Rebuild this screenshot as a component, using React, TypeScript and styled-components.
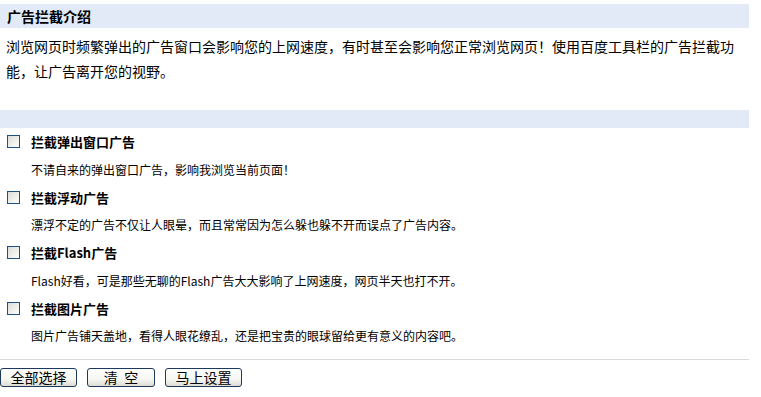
import React from "react";
import styled, { createGlobalStyle } from "styled-components";

const GlobalStyle = createGlobalStyle`
  html, body {
    margin: 0;
    padding: 0;
    background: #fff;
  }
  body {
    font-family: "Noto Sans CJK SC", "Liberation Sans", sans-serif;
    color: #000;
  }
`;

const Page = styled.div`
  width: 749px;
  padding-top: 4px;
`;

const Bar = styled.div<{ $h: number }>`
  height: ${(p) => p.$h}px;
  background: #e2eaf7;
  display: flex;
  align-items: center;
  padding-left: 7px;
`;

const BarTitle = styled.h2`
  margin: 0;
  font-size: 14px;
  font-weight: bold;
  line-height: 1;
`;

const Intro = styled.p`
  margin: 6px 0 26px;
  padding-left: 6px;
  font-size: 14px;
  line-height: 25px;
`;

const List = styled.div`
  display: flex;
  flex-direction: column;
`;

const TitleRow = styled.label`
  height: 27px;
  display: flex;
  align-items: center;
  gap: 11px;
  padding-left: 7px;
  font-size: 13px;
  font-weight: bold;
`;

const Check = styled.input.attrs({ type: "checkbox" })`
  appearance: none;
  margin: 0;
  width: 13px;
  height: 13px;
  box-sizing: border-box;
  border: 1px solid #1c5180;
  background: linear-gradient(135deg, #dcdcd7 0%, #f4f4f0 70%, #fff 100%);

  &:checked {
    background: #fff;
  }
`;

const Desc = styled.div`
  height: 28.5px;
  display: flex;
  align-items: center;
  padding-left: 31px;
  font-size: 12px;
`;

const Rule = styled.hr`
  margin: 9px 0 0;
  border: none;
  border-top: 1px solid #d9d9d9;
`;

const Actions = styled.div`
  display: flex;
  gap: 10px;
  padding-top: 8px;
`;

const Button = styled.button<{ $w: number }>`
  width: ${(p) => p.$w}px;
  height: 19px;
  padding: 0;
  border: 1px solid #1b3a5e;
  border-radius: 3px;
  background: linear-gradient(#ffffff 0%, #f6f6f2 60%, #dedcd3 100%);
  font-family: "Noto Sans CJK SC", "Liberation Sans", sans-serif;
  font-size: 14px;
  line-height: 17px;
  color: #000;
  white-space: pre;
  cursor: pointer;
`;

const items = [
  {
    title: "拦截弹出窗口广告",
    desc: "不请自来的弹出窗口广告，影响我浏览当前页面！",
  },
  {
    title: "拦截浮动广告",
    desc: "漂浮不定的广告不仅让人眼晕，而且常常因为怎么躲也躲不开而误点了广告内容。",
  },
  {
    title: "拦截Flash广告",
    desc: "Flash好看，可是那些无聊的Flash广告大大影响了上网速度，网页半天也打不开。",
  },
  {
    title: "拦截图片广告",
    desc: "图片广告铺天盖地，看得人眼花缭乱，还是把宝贵的眼球留给更有意义的内容吧。",
  },
];

export default function App() {
  return (
    <Page>
      <GlobalStyle />
      <Bar $h={24}>
        <BarTitle>广告拦截介绍</BarTitle>
      </Bar>
      <Intro>
        浏览网页时频繁弹出的广告窗口会影响您的上网速度，有时甚至会影响您正常浏览网页！使用百度工具栏的广告拦截功能，让广告离开您的视野。
      </Intro>
      <Bar $h={18} />
      <List>
        {items.map((it) => (
          <React.Fragment key={it.title}>
            <TitleRow>
              <Check />
              {it.title}
            </TitleRow>
            <Desc>{it.desc}</Desc>
          </React.Fragment>
        ))}
      </List>
      <Rule />
      <Actions>
        <Button $w={77}>全部选择</Button>
        <Button $w={68}>{"清  空"}</Button>
        <Button $w={77}>马上设置</Button>
      </Actions>
    </Page>
  );
}
